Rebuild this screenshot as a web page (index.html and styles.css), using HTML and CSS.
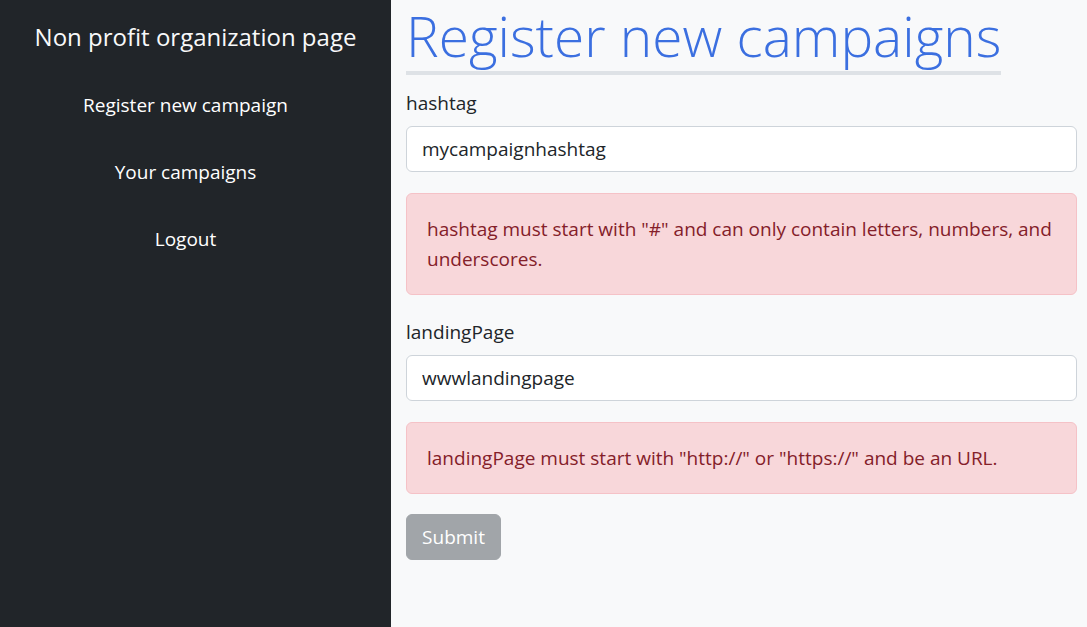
FILE: index.html
```html
<!DOCTYPE html>
<html lang="en">
<head>
<meta charset="utf-8">
<title>Register new campaigns</title>
<link rel="stylesheet" href="styles.css">
</head>
<body>
<aside class="sidebar">
  <div class="brand">Non profit organization page</div>
  <ul class="nav">
    <li><a href="#" class="nav-link">Register new campaign</a></li>
    <li><a href="#" class="nav-link">Your campaigns</a></li>
    <li><a href="#" class="nav-link">Logout</a></li>
  </ul>
</aside>
<main class="content">
  <h1 class="title">Register new campaigns</h1>
  <form class="form">
    <div class="field">
      <label class="form-label" for="hashtag">hashtag</label>
      <input class="form-control" id="hashtag" type="text" value="mycampaignhashtag">
    </div>
    <div class="alert">hashtag must start with "#" and can only contain letters, numbers, and underscores.</div>
    <div class="field">
      <label class="form-label" for="landing">landingPage</label>
      <input class="form-control" id="landing" type="text" value="wwwlandingpage">
    </div>
    <div class="alert">landingPage must start with "http://" or "https://" and be an URL.</div>
    <div class="actions">
      <button class="btn" type="button" disabled>Submit</button>
    </div>
  </form>
</main>
</body>
</html>
```
FILE: styles.css
```css
* { box-sizing: border-box; }
html, body { height: 100%; }
body {
  margin: 0;
  display: flex;
  font-family: "Open Sans", "Noto Sans", sans-serif;
  font-size: 19px;
  line-height: 1.5;
  color: #212529;
  background: #f8f9fa;
}
.sidebar {
  width: 391px;
  flex: 0 0 391px;
  background: #212529;
  color: #f8f9fa;
}
.brand {
  text-align: center;
  font-size: 24px;
  line-height: 36px;
  padding-top: 19px;
}
.nav {
  list-style: none;
  margin: 0;
  padding: 35px 20px 0 0;
  display: flex;
  flex-direction: column;
  gap: 37px;
  text-align: center;
}
.nav-link {
  color: #ffffff;
  text-decoration: none;
  font-size: 19px;
  line-height: 30px;
}
.content {
  flex: 1;
  padding: 0 10px 0 15px;
}
.title {
  display: inline-block;
  margin: 0 0 13px;
  padding-top: 1px;
  font-size: 55px;
  font-weight: 300;
  line-height: 70px;
  color: #3b6fe0;
  border-bottom: 4px solid #dee2e6;
}
.form { display: flex; flex-direction: column; }
.field { display: flex; flex-direction: column; }
.form-label {
  line-height: 30px;
  margin-bottom: 8px;
}
.form-control {
  font: inherit;
  color: #212529;
  height: 46px;
  padding: 7px 15px;
  border: 1px solid #ced4da;
  border-radius: 6px;
  background: #fff;
  width: 100%;
}
.alert {
  margin: 21px 0 22px;
  padding: 20px;
  border: 1px solid #f5c2c7;
  border-radius: 6px;
  background: #f8d7da;
  color: #842029;
  line-height: 30px;
}
.actions { display: flex; margin-top: -2px; }
.btn {
  font: inherit;
  color: #fff;
  background: #a1a5a9;
  border: 1px solid #a1a5a9;
  border-radius: 6px;
  padding: 7px 15px;
  height: 46px;
  width: 95px;
}
```
